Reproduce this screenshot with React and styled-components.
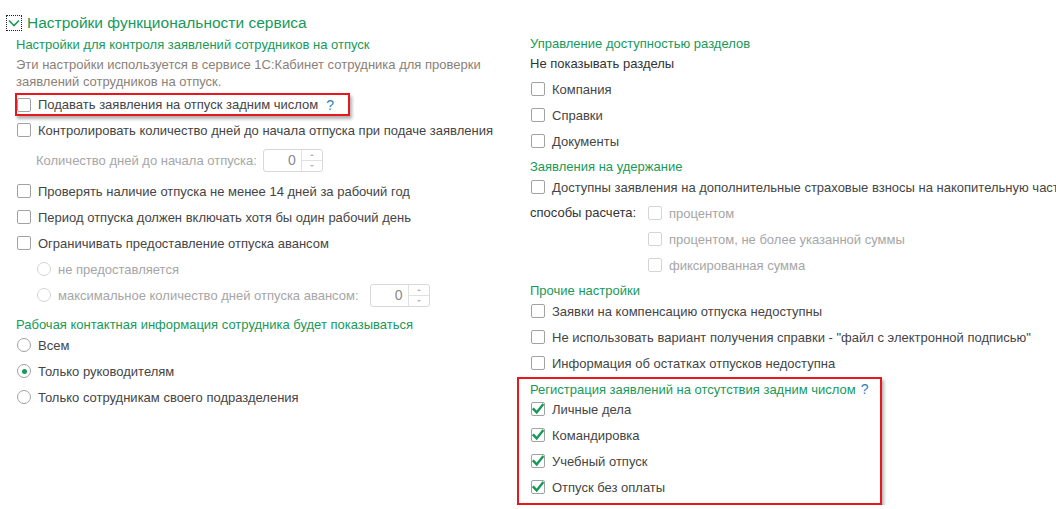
import React from 'react'
import styled, { createGlobalStyle } from 'styled-components'

const GREEN = '#17995a'
const TEXT = '#454545'
const MUTED = '#a6a6a6'

const GlobalStyle = createGlobalStyle`
  html, body {
    margin: 0;
    padding: 0;
    background: #fff;
  }
  body {
    font-family: "Liberation Sans", Arial, sans-serif;
    font-size: 13px;
    color: ${TEXT};
  }
`

const Check = ({ checked, disabled }) => (
  <Box $disabled={disabled}>
    {checked && (
      <svg width="14" height="14" viewBox="0 0 14 14">
        <path d="M2.6 7.2 L5.7 10.4 L11.6 3" fill="none" stroke={GREEN} strokeWidth="2.4" strokeLinecap="square" />
      </svg>
    )}
  </Box>
)

const CheckRow = ({ children, checked, disabled, indent = 2, help }) => (
  <Row $indent={indent} $muted={disabled}>
    <Check checked={checked} disabled={disabled} />
    <span>{children}</span>
    {help && <Help $gap={1}>?</Help>}
  </Row>
)

const RadioRow = ({ children, selected, disabled, indent = 2, extra }) => (
  <Row $indent={indent} $muted={disabled}>
    <Radio $disabled={disabled}>{selected && <Dot />}</Radio>
    <span>{children}</span>
    {extra}
  </Row>
)

const Spin = ({ value, offset }) => (
  <SpinBox $offset={offset}>
    <SpinValue>{value}</SpinValue>
    <SpinArrows>
      <SpinHalf><Tri $up /></SpinHalf>
      <SpinHalf $bottom><Tri /></SpinHalf>
    </SpinArrows>
  </SpinBox>
)

const App = () => {
  return (
    <Page>
      <GlobalStyle />
      <Header>
        <Toggle>
          <svg width="12" height="8" viewBox="0 0 12 8">
            <path d="M1 1.5 L6 6.5 L11 1.5" fill="none" stroke={GREEN} strokeWidth="1.6" />
          </svg>
        </Toggle>
        <HeaderTitle>Настройки функциональности сервиса</HeaderTitle>
      </Header>

      <Columns>
        <Column $top={1}>
          <GroupTitle $indent={1}>Настройки для контроля заявлений сотрудников на отпуск</GroupTitle>
          <Note>
            Эти настройки используется в сервисе 1С:Кабинет сотрудника для проверки
            <br />
            заявлений сотрудников на отпуск.
          </Note>
          <Marked $w={335} $single>
            <CheckRow indent={0} help>Подавать заявления на отпуск задним числом</CheckRow>
          </Marked>
          <CheckRow>Контролировать количество дней до начала отпуска при подаче заявления</CheckRow>
          <FieldRow $indent={21}>
            <span>Количество дней до начала отпуска:</span>
            <Spin value="0" offset={6} />
          </FieldRow>
          <CheckRow>Проверять наличие отпуска не менее 14 дней за рабочий год</CheckRow>
          <CheckRow>Период отпуска должен включать хотя бы один рабочий день</CheckRow>
          <CheckRow>Ограничивать предоставление отпуска авансом</CheckRow>
          <RadioRow disabled indent={22}>не предоставляется</RadioRow>
          <RadioRow disabled indent={22} extra={<Spin value="0" offset={4} />}>
            максимальное количество дней отпуска авансом:
          </RadioRow>

          <GroupTitle $indent={1} $gap={10}>Рабочая контактная информация сотрудника будет показываться</GroupTitle>
          <RadioRow>Всем</RadioRow>
          <RadioRow selected>Только руководителям</RadioRow>
          <RadioRow>Только сотрудникам своего подразделения</RadioRow>
        </Column>

        <Column>
          <GroupTitle $indent={13}>Управление доступностью разделов</GroupTitle>
          <Caption $indent={13}>Не показывать разделы</Caption>
          <CheckRow indent={14}>Компания</CheckRow>
          <CheckRow indent={14}>Справки</CheckRow>
          <CheckRow indent={14}>Документы</CheckRow>

          <GroupTitle $indent={13} $gap={6}>Заявления на удержание</GroupTitle>
          <CheckRow indent={14}>Доступны заявления на дополнительные страховые взносы на накопительную часть пенсии</CheckRow>
          <Methods>
            <MethodsLabel>способы расчета:</MethodsLabel>
            <div>
              <CheckRow disabled indent={0}>процентом</CheckRow>
              <CheckRow disabled indent={0}>процентом, не более указанной суммы</CheckRow>
              <CheckRow disabled indent={0}>фиксированная сумма</CheckRow>
            </div>
          </Methods>

          <GroupTitle $indent={13} $gap={6}>Прочие настройки</GroupTitle>
          <CheckRow indent={14}>Заявки на компенсацию отпуска недоступны</CheckRow>
          <CheckRow indent={14}>Не использовать вариант получения справки - "файл с электронной подписью"</CheckRow>
          <CheckRow indent={14}>Информация об остатках отпусков недоступна</CheckRow>

          <Marked $w={365}>
            <GroupTitle $indent={11}>
              Регистрация заявлений на отсутствия задним числом<Help $gap={5}>?</Help>
            </GroupTitle>
            <CheckRow checked indent={12}>Личные дела</CheckRow>
            <CheckRow checked indent={12}>Командировка</CheckRow>
            <CheckRow checked indent={12}>Учебный отпуск</CheckRow>
            <CheckRow checked indent={12}>Отпуск без оплаты</CheckRow>
          </Marked>
        </Column>
      </Columns>
    </Page>
  )
}

//Styles
const Page = styled.div`
  width: 1056px;
  height: 509px;
  box-sizing: border-box;
  padding: 13px 0 0 6px;
  overflow: hidden;
`
const Header = styled.div`
  display: flex;
  align-items: center;
  gap: 5px;
  height: 20px;
`
const Toggle = styled.div`
  width: 16px;
  height: 16px;
  box-sizing: border-box;
  border: 1px dotted #222;
  display: flex;
  align-items: center;
  justify-content: center;
`
const HeaderTitle = styled.div`
  color: ${GREEN};
  font-size: 15.5px;
  line-height: 20px;
  white-space: nowrap;
`
const Columns = styled.div`
  display: grid;
  grid-template-columns: 502px 1fr;
  margin: 4px 0 0 9px;
`
const Column = styled.div`
  display: flex;
  flex-direction: column;
  align-items: flex-start;
  min-width: 0;
  overflow: hidden;
  padding-top: ${p => p.$top || 0}px;
`
const GroupTitle = styled.div`
  color: ${GREEN};
  line-height: 14px;
  height: 14px;
  white-space: nowrap;
  margin-top: ${p => p.$gap || 0}px;
  padding-left: ${p => p.$indent || 0}px;
`
const Note = styled.div`
  color: #8b8177;
  line-height: 17px;
  margin: 4px 0 1px;
  padding-left: 1px;
`
const Caption = styled.div`
  height: 25px;
  line-height: 25px;
  padding-left: ${p => p.$indent}px;
  color: #333;
`
const Row = styled.div`
  display: flex;
  align-items: center;
  gap: 7px;
  height: 26px;
  flex-shrink: 0;
  white-space: nowrap;
  padding-left: ${p => p.$indent}px;
  color: ${p => (p.$muted ? MUTED : TEXT)};
`
const FieldRow = styled(Row)`
  height: 35px;
  gap: 0;
  color: ${MUTED};
`
const Box = styled.div`
  width: 14px;
  height: 14px;
  box-sizing: border-box;
  flex-shrink: 0;
  border: 1px solid ${p => (p.$disabled ? '#d5d5d5' : '#a2a2a2')};
  border-radius: 2px;
  background: #fff;
  display: flex;
  align-items: center;
  justify-content: center;
  & svg {
    margin: -1px;
    overflow: visible;
  }
`
const Radio = styled(Box)`
  border-radius: 50%;
`
const Dot = styled.div`
  width: 5px;
  height: 5px;
  border-radius: 50%;
  background: ${GREEN};
`
const Help = styled.span`
  color: #2c7fc0;
  font-size: 14px;
  margin-left: ${p => p.$gap}px;
`
const SpinBox = styled.div`
  display: flex;
  width: 60px;
  height: 23px;
  box-sizing: border-box;
  margin-left: ${p => p.$offset}px;
  border: 1px solid #d8d8d8;
  border-radius: 3px;
  background: #fff;
`
const SpinValue = styled.div`
  flex: 1;
  text-align: right;
  padding-right: 5px;
  line-height: 21px;
  color: #8a8a8a;
  font-size: 14px;
`
const SpinArrows = styled.div`
  width: 20px;
  border-left: 1px solid #e0e0e0;
  display: flex;
  flex-direction: column;
`
const SpinHalf = styled.div`
  flex: 1;
  display: flex;
  align-items: center;
  justify-content: center;
  border-top: ${p => (p.$bottom ? '1px solid #e0e0e0' : 'none')};
`
const Tri = styled.div`
  width: 0;
  height: 0;
  border-left: 2px solid transparent;
  border-right: 2px solid transparent;
  ${p => (p.$up ? 'border-bottom: 2px solid #b5b5b5;' : 'border-top: 2px solid #b5b5b5;')}
`
const Methods = styled.div`
  display: grid;
  grid-template-columns: 118px auto;
  padding-left: 13px;
`
const MethodsLabel = styled.div`
  line-height: 26px;
  color: #333;
`
const Marked = styled.div`
  width: ${p => p.$w}px;
  box-sizing: border-box;
  border: 2px solid #e8171b;
  box-shadow: 2px 3px 3px rgba(0, 0, 0, 0.3);
  margin: ${p => (p.$single ? '2px 0 1px' : '1px 0 0')};
  padding: ${p => (p.$single ? '0' : '3px 0')};
  height: ${p => (p.$single ? '23px' : 'auto')};
  & > div {
    height: ${p => (p.$single ? '19px' : '')};
  }
  & > ${GroupTitle} {
    height: 14px;
  }
`
//------Styles
export default App
